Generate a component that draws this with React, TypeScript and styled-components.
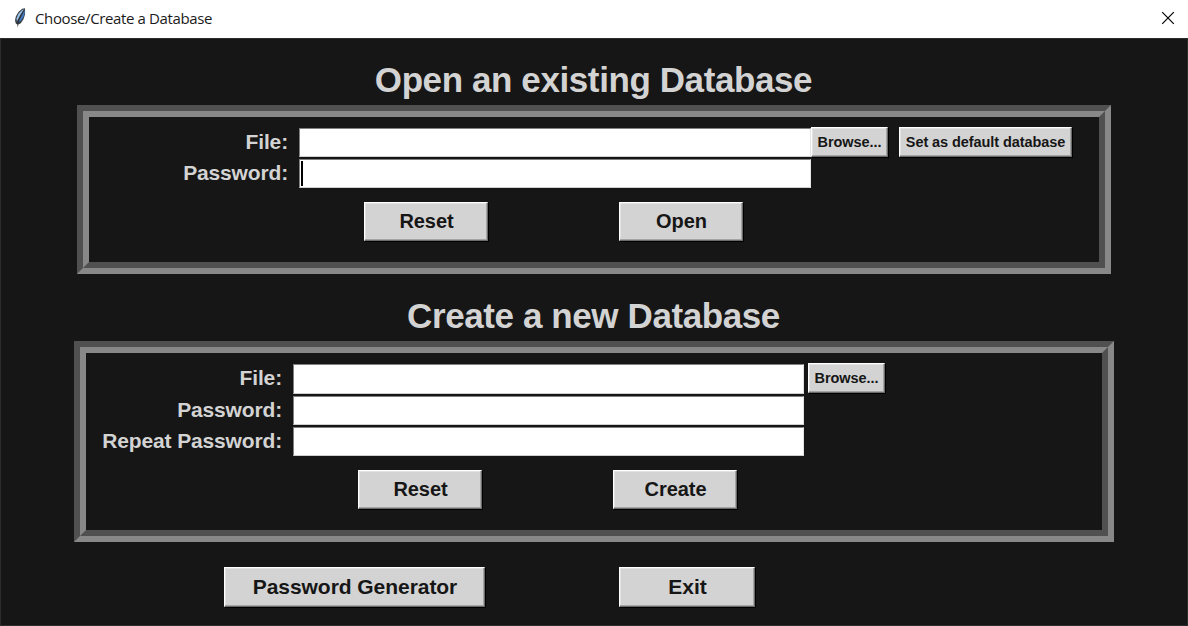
import React from 'react';
import styled, { createGlobalStyle } from 'styled-components';

const GlobalStyle = createGlobalStyle`
  * { box-sizing: border-box; }
  body { margin: 0; background: #161616; overflow: hidden; }
`;

const Window = styled.div`
  width: 1188px;
  height: 626px;
  display: flex;
  flex-direction: column;
  background: #161616;
  color: #d3d3d3;
  font-family: 'Liberation Sans', Arial, sans-serif;
  font-weight: bold;
`;

const TitleBar = styled.header`
  height: 38px;
  flex: none;
  display: flex;
  align-items: center;
  padding: 0 13px 2px 12px;
  background: #fff;
  color: #1b1b1b;
  font: 400 15px/36px 'Open Sans', 'Noto Sans', sans-serif;
`;

const TitleText = styled.span`
  margin-left: 7px;
  flex: 1;
  letter-spacing: -0.37px;
  white-space: nowrap;
`;

const Body = styled.main`
  flex: 1;
  display: flex;
  flex-direction: column;
  align-items: center;
  border: 1px solid #2c2c2c;
  padding-top: 21px;
`;

const Heading = styled.h1<{ $gap?: number }>`
  margin: ${(p) => p.$gap ?? 0}px 0 0;
  height: 45px;
  padding-right: 1px;
  font-size: 35px;
  line-height: 39px;
  letter-spacing: -0.4px;
  white-space: nowrap;
`;

const Groove = styled.section<{ $width: number; $height: number }>`
  flex: none;
  width: ${(p) => p.$width}px;
  height: ${(p) => p.$height}px;
  border: 6px solid;
  border-color: #505050 #888 #888 #505050;
`;

const GrooveInner = styled.div`
  height: 100%;
  border: 6px solid;
  border-color: #888 #505050 #505050 #888;
  padding-top: 10px;
`;

const Row = styled.div<{ $height: number }>`
  display: flex;
  height: ${(p) => p.$height}px;
`;

const Label = styled.label<{ $width: number }>`
  width: ${(p) => p.$width}px;
  padding-right: 11px;
  flex: none;
  text-align: right;
  font-size: 21px;
  line-height: 30px;
  letter-spacing: -0.15px;
  white-space: nowrap;
`;

const Entry = styled.div<{ $width?: number; $height?: number }>`
  display: flex;
  align-items: center;
  width: ${(p) => p.$width ?? 512}px;
  height: ${(p) => p.$height ?? 29}px;
  margin-top: 1px;
  padding-left: 2px;
  background: #fff;
  border: 1px solid;
  border-color: #808080 #e3e3e3 #d0d0d0 #808080;
`;

const Caret = styled.span`
  width: 2px;
  height: 25px;
  margin-left: -1px;
  background: #000;
`;

const Button = styled.button<{ $width: number; $height?: number; $size?: number; $spacing?: number; $gap?: number }>`
  flex: none;
  width: ${(p) => p.$width}px;
  height: ${(p) => p.$height ?? 39}px;
  margin: 0 0 0 ${(p) => p.$gap ?? 0}px;
  padding: 0 0 1px 1px;
  border: 1px solid;
  border-color: #fff #6b6b6b #6b6b6b #fff;
  box-shadow: inset -1px -1px #a4a4a4, inset 1px 1px #e2e2e2, 1px 1px #000;
  background: #d3d3d3;
  color: #161616;
  font: bold ${(p) => p.$size ?? 20}px/1 'Liberation Sans', Arial, sans-serif;
  letter-spacing: ${(p) => p.$spacing ?? -0.05}px;
  white-space: nowrap;
`;

const SmallButton = styled(Button).attrs({ $height: 30, $size: 14.5 })`
  padding: 0;
`;

const Actions = styled.div<{ $left: number; $top: number }>`
  display: flex;
  padding: ${(p) => p.$top}px 0 0 ${(p) => p.$left}px;
`;

const Footer = styled.footer`
  align-self: stretch;
  display: flex;
  padding: 25px 0 0 223px;
`;

const Feather = () => (
  <svg width="16" height="22" viewBox="0 0 16 22">
    <path d="M13 1.2 10.2 1.8 6.6 4.8 3.8 9.4 3 13.5l.8 3 1.5 1.1.4 3 .7-3 2.4-1.4 2.7-4 1.6-5z" fill="#3a4249" />
    <path d="M12 2.2 9.8 3.2 6.6 6.6 4.4 11.4l.5 2.8L8.4 8z" fill="#9cbfe4" />
    <path d="m12.5 3-2.3 5.2-3.8 6.6 2.3-.7 2.7-4 1.4-4.2z" fill="#3f7cc4" />
    <path d="M11.6 3.5 8.4 9 5.6 17" fill="none" stroke="#172130" strokeWidth=".6" />
  </svg>
);

const Close = () => (
  <svg width="14" height="14" viewBox="0 0 14 14">
    <path d="m1.2 1.2 11.6 11.6M12.8 1.2 1.2 12.8" stroke="#000" strokeWidth="1.2" />
  </svg>
);

export default function App() {
  return (
    <>
      <GlobalStyle />
      <Window>
        <TitleBar>
          <Feather />
          <TitleText>Choose/Create a Database</TitleText>
          <Close />
        </TitleBar>
        <Body>
          <Heading>Open an existing Database</Heading>
          <Groove $width={1034} $height={169}>
            <GrooveInner>
              <Row $height={31}>
                <Label $width={210}>File:</Label>
                <Entry />
                <SmallButton $width={77}>Browse...</SmallButton>
                <SmallButton $width={173} $spacing={-0.08} $gap={11}>Set as default database</SmallButton>
              </Row>
              <Row $height={31}>
                <Label $width={210}>Password:</Label>
                <Entry><Caret /></Entry>
              </Row>
              <Actions $left={275} $top={13}>
                <Button $width={124}>Reset</Button>
                <Button $width={124} $gap={131}>Open</Button>
              </Actions>
            </GrooveInner>
          </Groove>
          <Heading $gap={22}>Create a new Database</Heading>
          <Groove $width={1040} $height={201}>
            <GrooveInner>
              <Row $height={32}>
                <Label $width={207}>File:</Label>
                <Entry $width={511} $height={30} />
                <SmallButton $width={77} $gap={4}>Browse...</SmallButton>
              </Row>
              <Row $height={31}>
                <Label $width={207}>Password:</Label>
                <Entry $width={511} />
              </Row>
              <Row $height={31}>
                <Label $width={207}>Repeat Password:</Label>
                <Entry $width={511} />
              </Row>
              <Actions $left={272} $top={13}>
                <Button $width={124}>Reset</Button>
                <Button $width={124} $gap={131}>Create</Button>
              </Actions>
            </GrooveInner>
          </Groove>
          <Footer>
            <Button $width={261} $height={40} $size={21}>Password Generator</Button>
            <Button $width={136} $height={40} $size={21} $gap={134}>Exit</Button>
          </Footer>
        </Body>
      </Window>
    </>
  );
}
